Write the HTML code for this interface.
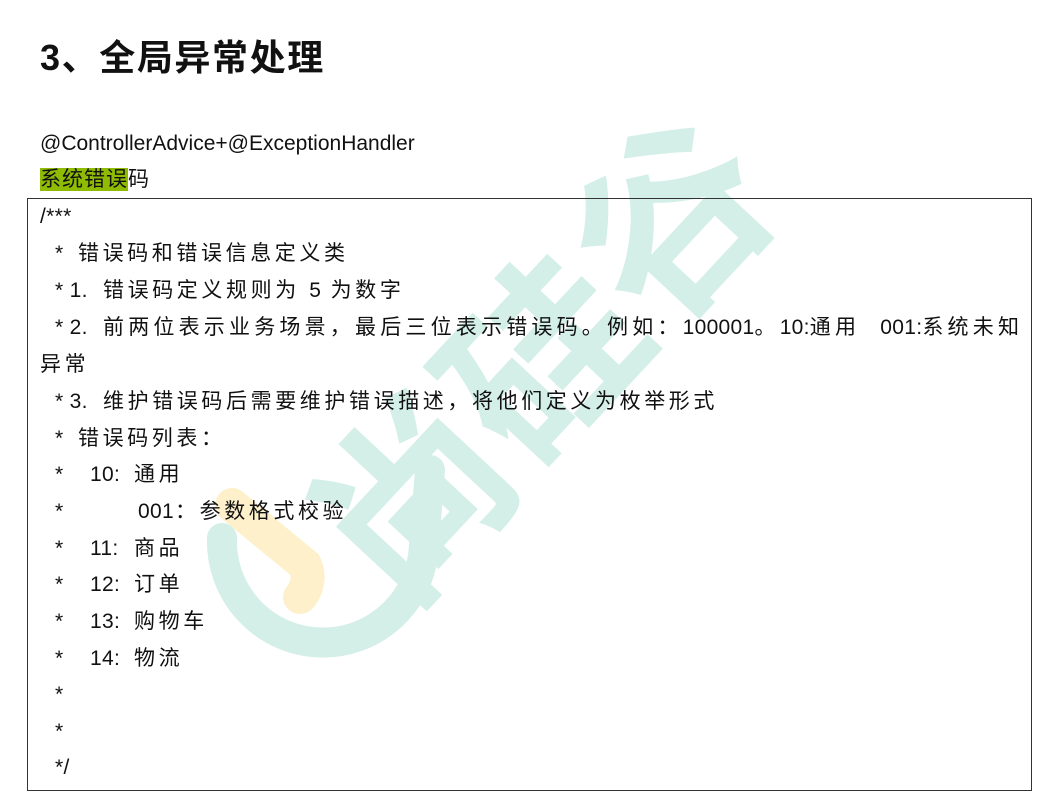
<!DOCTYPE html>
<html><head><meta charset="utf-8">
<style>
body{margin:0;width:1062px;height:803px;background:#fff;position:relative;overflow:hidden;font-family:"Liberation Sans","Noto Sans CJK SC",sans-serif;color:#111}
.wm{position:absolute;left:0;top:0}
.l{position:absolute;white-space:pre;font-size:21px;line-height:26px;letter-spacing:3.6px}
.l span.a{position:absolute;top:0}
.n{letter-spacing:0.3px}
.lat{letter-spacing:0}
h1{position:absolute;left:40px;top:36px;margin:0;font-size:36px;font-weight:bold;line-height:44px;letter-spacing:1.6px}
.box{position:absolute;left:27px;top:198px;width:1003px;height:591px;border:1px solid #333}
.hl{background:#8fbc00}
</style></head><body>
<svg class="wm" width="1062" height="803">
 <path d="M222,538 A101,101 0 0 0 424,545 L430,470" fill="none" stroke="#d4efe8" stroke-width="30" stroke-linecap="round"/>
 <path d="M232,505 L305,565 A30,30 0 0 1 300,597" fill="none" stroke="#fdf0cb" stroke-width="34" stroke-linecap="round"/>
 <text x="0" y="0" transform="translate(400,615) rotate(-47)" font-family="Noto Sans CJK SC" font-weight="bold" font-size="190" fill="#d4efe8">尚硅谷</text>
</svg>
<h1>3、全局异常处理</h1>
<div class="l lat" style="left:40px;top:131px;font-size:21px">@ControllerAdvice+@ExceptionHandler</div>
<div class="l" style="left:40px;top:167px;letter-spacing:1px"><span class="hl">系统错误</span>码</div>
<div class="box"></div>
<div class="l n" style="left:40px;top:204px">/***</div>
<div class="l" style="left:55px;top:241px">*<span class="a" style="left:23px">错误码和错误信息定义类</span></div>
<div class="l" style="left:55px;top:278px"><span class="n">* 1.</span><span class="a" style="left:48px">错误码定义规则为 <span class="n">5</span> 为数字</span></div>
<div class="l" style="left:55px;top:315px;letter-spacing:4.2px"><span class="n">* 2.</span><span class="a" style="left:48px">前两位表示业务场景，最后三位表示错误码。例如：<span class="n">100001</span>。<span class="n">10:</span>通用  <span class="n">001:</span>系统未知</span></div>
<div class="l" style="left:40px;top:352px">异常</div>
<div class="l" style="left:55px;top:389px"><span class="n">* 3.</span><span class="a" style="left:48px">维护错误码后需要维护错误描述，将他们定义为枚举形式</span></div>
<div class="l" style="left:55px;top:426px">*<span class="a" style="left:23px">错误码列表：</span></div>
<div class="l" style="left:55px;top:462px">*<span class="a n" style="left:35px">10:</span><span class="a" style="left:79px">通用</span></div>
<div class="l" style="left:55px;top:499px">*<span class="a n" style="left:83px">001</span><span class="a" style="left:120px">：参数格式校验</span></div>
<div class="l" style="left:55px;top:536px">*<span class="a n" style="left:35px">11:</span><span class="a" style="left:79px">商品</span></div>
<div class="l" style="left:55px;top:572px">*<span class="a n" style="left:35px">12:</span><span class="a" style="left:79px">订单</span></div>
<div class="l" style="left:55px;top:609px">*<span class="a n" style="left:35px">13:</span><span class="a" style="left:79px">购物车</span></div>
<div class="l" style="left:55px;top:646px">*<span class="a n" style="left:35px">14:</span><span class="a" style="left:79px">物流</span></div>
<div class="l" style="left:55px;top:682px">*</div>
<div class="l" style="left:55px;top:719px">*</div>
<div class="l n" style="left:55px;top:755px">*/</div>
</body></html>
